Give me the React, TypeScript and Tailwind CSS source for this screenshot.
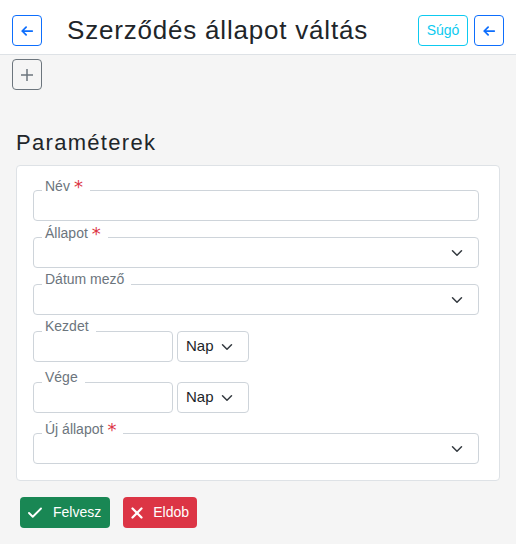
import { Check, X } from "lucide-react";

function ArrowLeft() {
  return (
    <svg width="14" height="14" viewBox="0 0 16 16" fill="none" stroke="currentColor" strokeWidth="2" strokeLinecap="round" strokeLinejoin="round">
      <path d="M14 8H2.5M7 3.5L2.5 8 7 12.5" />
    </svg>
  );
}

function Chevron() {
  return (
    <svg width="16" height="12" viewBox="0 0 16 16" fill="none" stroke="#343a40" strokeWidth="2" strokeLinecap="round" strokeLinejoin="round">
      <path d="M2 5l6 6 6-6" />
    </svg>
  );
}

function Field({ label, required, children, className = "" }: { label: string; required?: boolean; children: React.ReactNode; className?: string }) {
  return (
    <div className={"relative " + className}>
      {children}
      <span className="absolute left-[9px] top-[-13px] bg-white pl-[3px] pr-[7px] text-[14px] leading-[16px] text-[#6c757d]">
        {label}
        {required && (
          <span className="relative top-[2px] ml-[4px] font-['DejaVu_Sans',sans-serif] text-[18px] text-[#dc3545]">*</span>
        )}
      </span>
    </div>
  );
}

function Select({ className = "" }: { className?: string }) {
  return (
    <div className={"flex h-[31px] items-center justify-end rounded-[4px] border border-[#ced4da] bg-white pr-[13px] " + className}>
      <Chevron />
    </div>
  );
}

function Input({ className = "" }: { className?: string }) {
  return <div className={"h-[31px] rounded-[4px] border border-[#ced4da] bg-white " + className} />;
}

function NapSelect() {
  return (
    <div className="flex h-[31px] w-[72px] items-center justify-between rounded-[4px] border border-[#ced4da] bg-white pl-[8px] pr-[13px] text-[15px] text-[#212529]">
      <span>Nap</span>
      <Chevron />
    </div>
  );
}

export default function App() {
  return (
    <div className="min-h-[544px] w-[516px] bg-[#f5f5f5] font-['Liberation_Sans',Arial,sans-serif]">
      <header className="flex h-[55px] items-start border-b border-[#dee2e6] bg-white px-3 pt-[15px]">
        <button className="flex h-[31px] w-[30px] items-center justify-center rounded-[4px] border border-[#0d6efd] text-[#0d6efd]">
          <ArrowLeft />
        </button>
        <h1 className="ml-[25px] flex h-[31px] items-center text-[26px] tracking-[0.8px] text-[#212529]">Szerződés állapot váltás</h1>
        <div className="ml-auto flex gap-[6px]">
          <button className="h-[31px] w-[50px] rounded-[4px] border border-[#0dcaf0] text-[14px] text-[#0dcaf0]">Súgó</button>
          <button className="flex h-[31px] w-[30px] items-center justify-center rounded-[4px] border border-[#0d6efd] text-[#0d6efd]">
            <ArrowLeft />
          </button>
        </div>
      </header>

      <div className="px-3 pt-[4px]">
        <button className="flex h-[31px] w-[30px] items-center justify-center rounded-[4px] border border-[#6c757d] text-[#6c757d]">
          <svg width="14" height="14" viewBox="0 0 14 14" stroke="currentColor" strokeWidth="1.5">
            <path d="M7 1v12M1 7h12" />
          </svg>
        </button>
      </div>

      <h2 className="ml-4 mt-[40px] text-[22px] leading-[26px] tracking-[1.3px] text-[#212529]">Paraméterek</h2>

      <div className="mx-4 mt-[9px] rounded-[4px] border border-[#dee2e6] bg-white pb-4 pl-4 pr-5 pt-6">
        <Field label="Név" required>
          <Input />
        </Field>
        <Field label="Állapot" required className="mt-4">
          <Select />
        </Field>
        <Field label="Dátum mező" className="mt-4">
          <Select />
        </Field>
        <div className="mt-4 flex gap-1">
          <Field label="Kezdet">
            <Input className="w-[140px]" />
          </Field>
          <NapSelect />
        </div>
        <div className="mt-5 flex gap-1">
          <Field label="Vége">
            <Input className="w-[140px]" />
          </Field>
          <NapSelect />
        </div>
        <Field label="Új állapot" required className="mt-5">
          <Select />
        </Field>
      </div>

      <div className="ml-5 mt-4 flex gap-[13px]">
        <button className="flex h-[31px] items-center gap-[9px] rounded-[4px] bg-[#198754] pl-[6px] pr-[9px] text-[14px] text-white">
          <Check size={18} strokeWidth={2.5} />
          Felvesz
        </button>
        <button className="flex h-[31px] items-center gap-[7px] rounded-[4px] bg-[#dc3545] pl-[5px] pr-[8px] text-[14px] text-white">
          <X size={18} strokeWidth={3} />
          Eldob
        </button>
      </div>
    </div>
  );
}
